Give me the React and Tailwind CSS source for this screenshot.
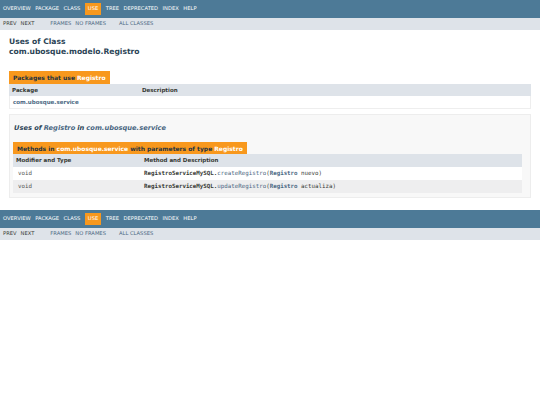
import React from 'react';

const NAV = ['Overview', 'Package', 'Class', 'Use', 'Tree', 'Deprecated', 'Index', 'Help'];

function TopNav() {
  return (
    <div>
      <div className="h-[18px] bg-[#4D7A97] flex items-center pl-[3px] gap-[4.5px] text-[5.2px] text-white uppercase">
        {NAV.map((n) =>
          n === 'Use' ? (
            <span key={n} className="bg-[#F8981D] h-[12px] px-[3px] flex items-center">{n}</span>
          ) : (
            <span key={n}>{n}</span>
          )
        )}
      </div>
      <div className="h-[12px] bg-[#dee3e9] flex items-center text-[5.2px] uppercase">
        <span className="ml-[3px] text-[#353833]">Prev</span>
        <span className="ml-[4px] text-[#353833]">Next</span>
        <span className="ml-[16px] text-[#4A6782]">Frames</span>
        <span className="ml-[4px] text-[#4A6782]">No Frames</span>
        <span className="ml-[13px] text-[#4A6782]">All Classes</span>
      </div>
    </div>
  );
}

function Caption({ h = 'h-[12px]', children }) {
  return (
    <div className="flex">
      <div className={`bg-[#F8981D] ${h} px-[4px] flex items-center text-[6px] font-bold text-[#253441]`}>
        {children}
      </div>
    </div>
  );
}

export default function App() {
  return (
    <div className="w-[540px] min-h-[405px] bg-white font-['DejaVu_Sans',Arial,sans-serif] text-[#353833]">
      <TopNav />

      <div className="px-[9px] pt-[7px] text-[7.6px] leading-[9.5px] font-bold text-[#2c4557]">
        <div>Uses of Class</div>
        <div>com.ubosque.modelo.Registro</div>
      </div>

      <div className="mx-[9px] mt-[15px]">
        <Caption h="h-[13px]">
          Packages that use <span className="text-white ml-[2px]">Registro</span>
        </Caption>
        <div className="w-[522px]">
          <div className="flex h-[12px] items-center bg-[#dee3e9] text-[5.5px] font-bold">
            <div className="w-[133px] pl-[3px]">Package</div>
            <div>Description</div>
          </div>
          <div className="flex h-[13px] items-center bg-white border border-[#eeeeee] border-t-0 text-[5.5px] font-bold text-[#4A6782]">
            <div className="pl-[3px]">com.ubosque.service</div>
          </div>
        </div>
      </div>

      <div className="mx-[9px] mt-[5px] w-[522px] bg-[#f8f8f8] border border-[#ededed] px-[3px] pt-[7px] pb-[4px]">
        <div className="text-[6.7px] italic font-bold text-[#2c4557] h-[12px] flex items-center pl-[1px]">
          Uses of <span className="text-[#4A6782] mx-[2px]">Registro</span> in <span className="text-[#4A6782] ml-[2px]">com.ubosque.service</span>
        </div>
        <div className="mt-[8px]">
          <Caption>
            Methods in <span className="text-white mx-[2px]">com.ubosque.service</span> with parameters of type <span className="text-white ml-[2px]">Registro</span>
          </Caption>
          <div className="w-[509px]">
            <div className="flex h-[13px] items-center bg-[#dee3e9] text-[5.5px] font-bold">
              <div className="w-[131px] pl-[3px]">Modifier and Type</div>
              <div>Method and Description</div>
            </div>
            {[
              ['createRegistro', 'nuevo', 'bg-white'],
              ['updateRegistro', 'actualiza', 'bg-[#eeeeef]'],
            ].map(([m, arg, bg]) => (
              <div key={m} className={`flex h-[13px] items-center ${bg} text-[5.8px] font-['DejaVu_Sans_Mono',monospace]`}>
                <div className="w-[131px] pl-[5px] text-[#555555]">void</div>
                <div className="whitespace-pre">
                  <span className="font-bold">RegistroServiceMySQL.</span>
                  <span className="text-[#4A6782]">{m}</span>(
                  <span className="text-[#4A6782] font-bold">Registro</span> {arg})
                </div>
              </div>
            ))}
          </div>
        </div>
      </div>

      <div className="mt-[12px]">
        <TopNav />
      </div>
    </div>
  );
}
